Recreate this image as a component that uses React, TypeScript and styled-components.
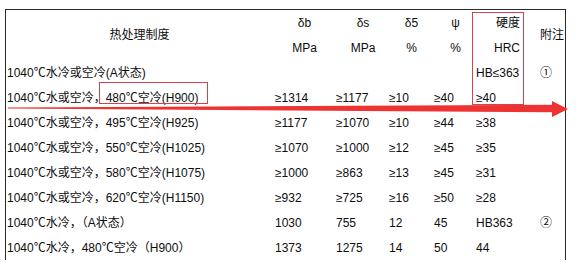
import React from "react";
import styled, { createGlobalStyle } from "styled-components";

const GlobalStyle = createGlobalStyle`
  html, body {
    margin: 0;
    padding: 0;
    background: #ffffff;
    overflow: hidden;
  }
  body {
    font-family: "Liberation Sans", Arial, "Noto Sans CJK SC", sans-serif;
    font-size: 12px;
    color: #0d0d0d;
  }
`;

const Page = styled.div`
  position: relative;
  width: 576px;
  height: 262px;
  padding: 9px 0 0 5px;
  box-sizing: border-box;
`;

const Table = styled.div`
  display: grid;
  grid-template-columns: 267px 61px 53px 45px 42px 49px 42px;
  grid-auto-rows: 25px;
  width: 559px;
  border-top: 1px solid #2b2b2b;
  border-left: 1px solid #2b2b2b;
  border-right: 1px solid #2b2b2b;
  font-family: "Liberation Sans", Arial, "Noto Sans CJK SC", sans-serif;
  font-size: 12px;
  line-height: 14px;
  white-space: nowrap;
  color: #0d0d0d;
`;

const HeadCell = styled.div<{ $align: "left" | "center" | "right"; $span?: number; $padL?: number; $padR?: number }>`
  display: flex;
  align-items: center;
  justify-content: ${(p) => (p.$align === "center" ? "center" : p.$align === "right" ? "flex-end" : "flex-start")};
  grid-row: span ${(p) => p.$span ?? 1};
  padding-left: ${(p) => p.$padL ?? 0}px;
  padding-right: ${(p) => p.$padR ?? 0}px;
`;

const Cell = styled.div<{ $padL: number }>`
  display: flex;
  align-items: center;
  padding-left: ${(p) => p.$padL}px;
`;

const Mark = styled.div<{ $left: number; $top: number; $w: number; $h: number }>`
  position: absolute;
  left: ${(p) => p.$left}px;
  top: ${(p) => p.$top}px;
  width: ${(p) => p.$w}px;
  height: ${(p) => p.$h}px;
  box-sizing: border-box;
  border: 1px solid #d4434a;
  pointer-events: none;
`;

const Arrow = styled.svg`
  position: absolute;
  left: 0;
  top: 95px;
  width: 576px;
  height: 30px;
  pointer-events: none;
`;

const rows: string[][] = [
  ["1040℃水冷或空冷(A状态)", "", "", "", "", "HB≤363", "①"],
  ["1040℃水或空冷，480℃空冷(H900)", "≥1314", "≥1177", "≥10", "≥40", "≥40", ""],
  ["1040℃水或空冷，495℃空冷(H925)", "≥1177", "≥1070", "≥10", "≥44", "≥38", ""],
  ["1040℃水或空冷，550℃空冷(H1025)", "≥1070", "≥1000", "≥12", "≥45", "≥35", ""],
  ["1040℃水或空冷，580℃空冷(H1075)", "≥1000", "≥863", "≥13", "≥45", "≥31", ""],
  ["1040℃水或空冷，620℃空冷(H1150)", "≥932", "≥725", "≥16", "≥50", "≥28", ""],
  ["1040℃水冷，（A状态）", "1030", "755", "12", "45", "HB363", "②"],
  ["1040℃水冷，480℃空冷（H900）", "1373", "1275", "14", "50", "44", ""],
];

const colPad = [1, 2, 2, 2, 2, 2, 17];

export default function App() {
  return (
    <>
      <GlobalStyle />
      <Page>
        <Table>
          <HeadCell $align="center" $span={2}>热处理制度</HeadCell>
          <HeadCell $align="center" $padL={2}>δb</HeadCell>
          <HeadCell $align="center" $padL={5}>δs</HeadCell>
          <HeadCell $align="center" $padL={4}>δ5</HeadCell>
          <HeadCell $align="center" $padL={5}>ψ</HeadCell>
          <HeadCell $align="right" $padR={3}>硬度</HeadCell>
          <HeadCell $align="left" $span={2} $padL={17}>附注</HeadCell>
          <HeadCell $align="center" $padL={2}>MPa</HeadCell>
          <HeadCell $align="center" $padL={5}>MPa</HeadCell>
          <HeadCell $align="center" $padL={4}>%</HeadCell>
          <HeadCell $align="center" $padL={5}>%</HeadCell>
          <HeadCell $align="right" $padR={3}>HRC</HeadCell>
          {rows.map((r, i) =>
            r.map((v, j) => (
              <Cell key={`${i}-${j}`} $padL={colPad[j]}>
                {v}
              </Cell>
            ))
          )}
        </Table>
        <Mark $left={99} $top={82} $w={109} $h={22} />
        <Mark $left={472} $top={12} $w={52} $h={93} />
        <Arrow viewBox="0 0 576 30">
          <polygon
            points="8,12.4 552,9.8 552,6 568,14 552,22 552,17.2 8,13.6"
            fill="#ee3333"
          />
        </Arrow>
      </Page>
    </>
  );
}
